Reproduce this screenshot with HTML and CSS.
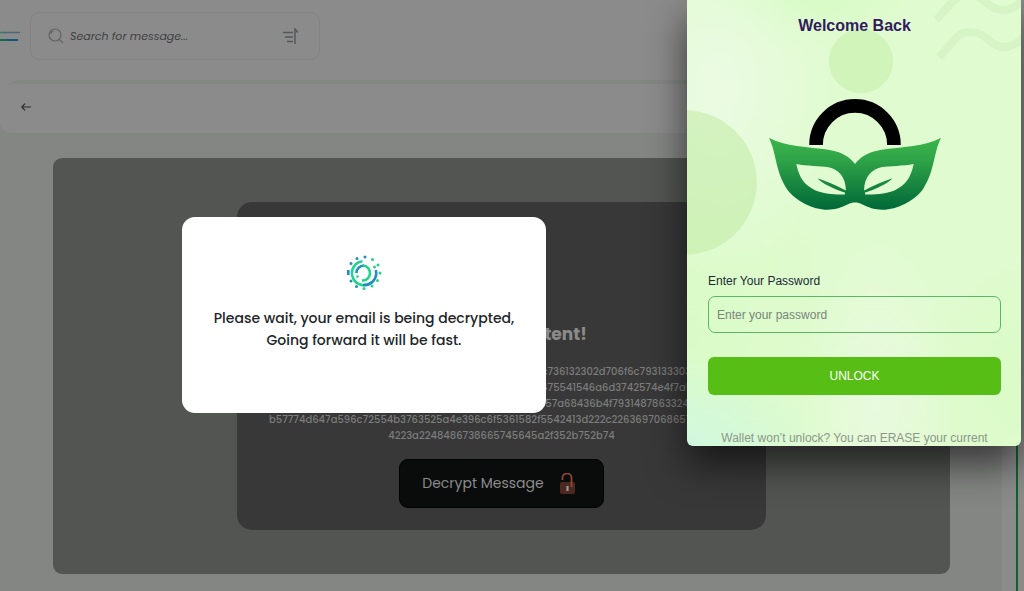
FILE: index.html
```html
<!DOCTYPE html>
<html lang="en">
<head>
<meta charset="utf-8">
<title>Decrypt Message</title>
<link rel="stylesheet" href="styles.css">
</head>
<body>
<div class="app">
  <header class="topbar">
    <button class="menu" aria-label="Menu">
      <svg width="20" height="12" viewBox="0 0 20 12">
        <path d="M0 2.500h5" stroke="#2f8058" stroke-width="1.500"/><path d="M4 2.500h16" stroke="#48697c" stroke-width="1.500"/><path d="M0 10h7" stroke="#0d7048" stroke-width="2"/><path d="M7 10h11" stroke="#12567a" stroke-width="2"/>
      </svg>
    </button>
    <label class="search">
      <svg width="16" height="16" viewBox="0 0 16 16" fill="none" stroke="#626464" stroke-width="1.200"><circle cx="7" cy="7" r="6"/><path d="M11.500 11.500l3.500 3.500M2.500 6a4 4 0 0 1 3-3"/></svg>
      <input class="search-input" type="search" aria-label="Search" placeholder="Search for message...">
      <svg width="18" height="16" viewBox="0 0 18 16" fill="none" stroke="#55585a" stroke-width="1.500"><path d="M1 4.500h10M3 9h8M5 13.500h6M13 16V1l3 3.500"/></svg>
    </label>
  </header>
  <main class="panel">
    <nav class="backbar">
      <button class="back" aria-label="Back">
        <svg width="10" height="8" viewBox="0 0 10 8" fill="none" stroke="#2b2d2c" stroke-width="1.2"><path d="M10 4H1M4 .7L.8 4 4 7.300"/></svg>
      </button>
    </nav>
    <section class="message">
      <article class="card">
        <h1 class="card-title">Encrypted Content!</h1>
        <p class="cipher">7b2276657273696f6e223a227832353531392d7873616c736132302d706f6c7931333035222c2<br>26e6f6e6365223a224a6b33556d4e52714c7a4b35516d475541546a6d3742574e4f7a5a527842<br>222c22657068656d5075626c69634b6579223a226b67657a68436b4f79314878633241624e5a7<br>b57774d647a596c72554b3763525a4e396c6f5361582f5542413d222c22636970686572746578<br>4223a2248486738665745645a2f352b752b74</p>
        <button class="decrypt">
          <span>Decrypt Message</span>
          <svg width="17" height="22" viewBox="0 0 17 22"><rect x="1" y="9" width="15" height="12" rx="2" fill="#4b2922"/><path d="M3.500 7V5.500a4.500 4.500 0 0 1 9-1V14" fill="none" stroke="#92452f" stroke-width="1.8"/><path d="M8.500 13v5" stroke="#999" stroke-width="2.200"/></svg>
        </button>
      </article>
    </section>
  </main>
  <div class="edge"></div>

  <div class="overlay">
    <div class="dialog" role="dialog" aria-label="Decrypting">
      <svg class="spinner" width="36" height="36" viewBox="0 0 36 36" fill="none">
        <g stroke-width="2.600"><path d="M16.500 6.200A12 12 0 1 0 26 27" stroke="#24d38b"/><path d="M17 30A12 12 0 0 0 29.800 15" stroke="#218dc4"/></g>
        <g stroke-width="2.600"><path d="M10.500 18A7.500 7.500 0 0 1 18 10.500" stroke="#218dc4"/><path d="M17 10.500A7.500 7.500 0 1 1 16 25.500" stroke="#24d38b"/></g>
        <g fill="#218dc4"><circle cx="5" cy="8.500" r="1.500"/><circle cx="11" cy="3.500" r="1.500"/><circle cx="19" cy="2" r="1.500"/><rect x="1" y="15" width="2.600" height="5"/><circle cx="5" cy="26" r="1.500"/><circle cx="10.500" cy="31.500" r="1.500"/></g>
        <g fill="#24d38b"><circle cx="26.500" cy="4.500" r="1.500"/><circle cx="32" cy="10" r="1.500"/><circle cx="28.500" cy="12" r="1.500"/><circle cx="34" cy="18" r="1.500"/><circle cx="31.500" cy="25.500" r="1.500"/><circle cx="26" cy="31" r="1.500"/><circle cx="18" cy="33.500" r="1.500"/><circle cx="11.500" cy="21.500" r="1.300"/></g>
      </svg>
      <p class="dialog-text">Please wait, your email is being decrypted,<br>Going forward it will be fast.</p>
    </div>
  </div>

  <aside class="wallet">
    <svg class="wallet-art" viewBox="0 0 334 445" preserveAspectRatio="xMidYMin slice" aria-hidden="true">
      <circle cx="174" cy="61" r="32" fill="#d1f4bb"/>
      <circle cx="-2" cy="182" r="72" fill="#bdea9f" opacity=".5"/>
      <g fill="none" stroke="#d6f4c6" stroke-width="8"><path d="M249 20C266 2 267-5 281-5C297-5 301 10 315 10Q326 10 336 0"/><path d="M252 57C269 39 270 32 283 32C300 32 302 47 317 47Q327 47 337 36"/></g>
    </svg>
    <h2 class="wallet-title">Welcome Back</h2>
    <svg class="wallet-logo" width="172" height="112" viewBox="1 1 170 110" aria-hidden="true">
      <defs><linearGradient id="leaf" x1="0" y1="0" x2="0" y2="1"><stop offset="0" stop-color="#3bb54a"/><stop offset=".3" stop-color="#30a448"/><stop offset="1" stop-color="#006838"/></linearGradient></defs>
      <path d="M47.500 47A38.500 38.500 0 1 1 124.500 47" fill="none" stroke="#000" stroke-width="13.500"/>
      <path fill="url(#leaf)" fill-rule="evenodd" d="M1 40C17 49 39 49 61 52C73 54 81 59 86 66C91 59 99 54 111 52C133 49 155 49 171 40C163 57 165 73 153 91C145 102 128 111 113 111C98 111 94 104 86 104C78 104 74 111 59 111C44 111 27 102 19 91C7 73 9 57 1 40ZM28 66C31 80 36 87 47 92C57 96 67 96 76 96L76 94C66 91 53 85 49 80C58 83 67 87 77 92C77 78 69 71 60 69C51 68 39 68 28 66ZM144 66C133 68 121 68 112 69C103 71 95 78 95 92C105 87 114 83 123 80C119 85 106 91 96 94L96 96C105 96 115 96 125 92C136 87 141 80 144 66Z"/>
    </svg>
    <form class="wallet-form">
      <label class="wallet-label" for="password">Enter Your Password</label>
      <input class="wallet-input" id="password" type="password" placeholder="Enter your password">
      <button class="unlock" type="button">UNLOCK</button>
    </form>
    <p class="wallet-note">Wallet won’t unlock? You can ERASE your current</p>
  </aside>
</div>
</body>
</html>
```

FILE: styles.css
```css
* { box-sizing: border-box; }
body { margin: 0; background: #8b8b8b; font-family: Poppins, Inter, sans-serif; }
button, input { font: inherit; }
.app { position: relative; min-height: 100vh; overflow: hidden; display: flex; flex-direction: column; }

.topbar { display: flex; align-items: center; gap: 10px; padding: 12px 0 20px; }
.menu { padding: 0; border: 0; background: none; display: flex; }
.search { display: flex; align-items: center; gap: 6px; width: 290px; height: 48px; padding: 0 19px 0 17px; border: 1px solid #818383; border-radius: 9px; }
.search-input { flex: 1; min-width: 0; padding: 0; border: 0; outline: 0; background: none; font-size: 11px; font-style: italic; }
.search-input::placeholder { color: #3f4141; opacity: 1; }

.panel { flex: 1; margin-right: 22px; padding-top: 4px; border-radius: 20px 0 0 0; background: #848684; }
.backbar { display: flex; align-items: center; height: 49px; padding: 0 0 4px 21px; background: #8b8b8b; border-radius: 12px; }
.back { padding: 0; border: 0; background: none; display: flex; }
.message { display: flex; justify-content: center; margin: 25px 52px 17px 53px; padding: 44px 20px; background: #535553; border-radius: 9px; }
.card { display: flex; flex-direction: column; align-items: center; width: 529px; padding: 119px 20px 22px; border-radius: 15px; background: #373837; }
.card-title { margin: 0 0 16px; font-size: 17px; line-height: 27px; font-weight: 700; color: #8a8b8a; }
.cipher { margin: 0; font-size: 10px; line-height: 16px; font-weight: 500; text-align: center; white-space: nowrap; color: #7b7c7b; }
.decrypt { display: flex; align-items: center; gap: 15px; height: 49px; margin-top: 15px; padding: 0 27px 0 22px; border: 1px solid #000; border-radius: 9px; background: #0a0c0b; color: #8b8b8b; font-size: 14px; }
.edge { position: absolute; top: 0; bottom: 0; right: 6px; width: 2px; background: #175c32; }

.overlay { position: absolute; inset: 0 296px 0 0; display: flex; justify-content: center; align-items: flex-start; padding-top: 217px; }
.dialog { display: flex; flex-direction: column; align-items: center; width: 364px; height: 196px; padding-top: 38px; border-radius: 13px; background: #fff; }
.dialog-text { margin: 16px 0 0; font-size: 14px; line-height: 22px; font-weight: 500; text-align: center; white-space: nowrap; color: #212529; }

.wallet { position: absolute; top: 0; right: 3px; width: 334px; height: 446px; padding: 14px 20px 0 21px; overflow: hidden; display: flex; flex-direction: column; align-items: center; border-radius: 0 0 6px 6px; font-family: "Liberation Sans", Arial, sans-serif;
  background:
    radial-gradient(ellipse 130px 90px at 0 100%, #d0f8df, transparent),
    radial-gradient(ellipse 75px 160px at 190px 400px, #e9fadf, transparent),
    radial-gradient(ellipse 115px 190px at 30px 90px, #ebfbe3, transparent),
    radial-gradient(ellipse 130px 50px at 110px 0, #d6fbc4, transparent),
    radial-gradient(ellipse 180px 260px at 0 330px, #dafbc7, transparent),
    radial-gradient(ellipse 110px 150px at 100% 380px, #dafbc7, transparent),
    #e1fbd1;
  box-shadow: 0 18px 38px rgba(0, 0, 0, .6); }
.wallet-art { position: absolute; top: 0; left: 0; width: 100%; height: 100%; }
.wallet-title { position: relative; margin: 0; font-size: 16px; line-height: 24px; color: #341a5d; }
.wallet-logo { position: relative; flex-shrink: 0; margin: 60px 0 63px; }
.wallet-form { position: relative; width: 100%; display: flex; flex-direction: column; }
.wallet-label { font-size: 12px; line-height: 16px; color: #202a35; margin-bottom: 7px; }
.wallet-input { height: 37px; padding: 0 8px; border: 1px solid #5cb866; border-radius: 7px; background: none; font-size: 12px; }
.wallet-input::placeholder { color: #7a857c; opacity: 1; }
.unlock { height: 38px; margin-top: 24px; border: 0; border-radius: 6px; background: #57be16; color: #fff; font-size: 12px; }
.wallet-note { position: relative; margin: 34px 0 0; font-size: 12px; line-height: 18px; white-space: nowrap; color: #8c9888; }
```
